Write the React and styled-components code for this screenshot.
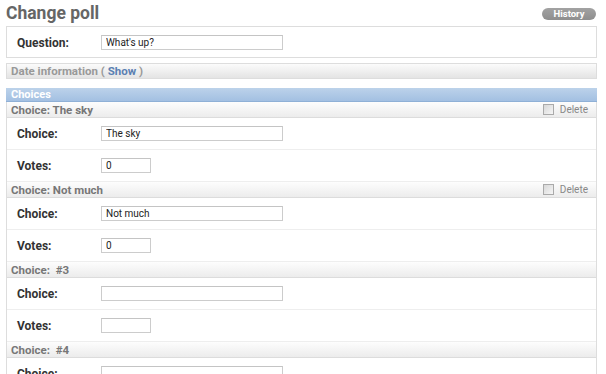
import React from 'react'
import styled, { createGlobalStyle } from 'styled-components'

const GlobalStyle = createGlobalStyle`
  html, body {
    margin: 0;
    padding: 0;
    background: #fff;
    font-family: Roboto, "Liberation Sans", Arial, sans-serif;
    color: #333;
  }
`

const choices = [
  { title: 'The sky', choice: 'The sky', votes: '0', canDelete: true },
  { title: 'Not much', choice: 'Not much', votes: '0', canDelete: true },
  { title: '\u00a0#3', choice: '', votes: '', canDelete: false },
  { title: '\u00a0#4', choice: '', votes: '', canDelete: false },
]

const App = () => {
  return (
    <>
      <GlobalStyle />
      <Page>
        <Header>
          <Title>Change poll</Title>
          <HistoryLink>History</HistoryLink>
        </Header>

        <Module>
          <FormRow $last>
            <Label>Question:</Label>
            <TextInput $width={182} defaultValue="What's up?" />
          </FormRow>
        </Module>

        <CollapseBar>
          Date information ( <ShowLink>Show</ShowLink> )
        </CollapseBar>

        <InlineGroup>
          <GroupHeader>Choices</GroupHeader>
          {choices.map((item, i) => (
            <InlineItem key={i}>
              <InlineTitle>
                <span>Choice: {item.title}</span>
                {item.canDelete && (
                  <DeleteBox>
                    <Check />
                    Delete
                  </DeleteBox>
                )}
              </InlineTitle>
              <FormRow>
                <Label>Choice:</Label>
                <TextInput $width={182} defaultValue={item.choice} />
              </FormRow>
              <FormRow>
                <Label>Votes:</Label>
                <TextInput $width={50} defaultValue={item.votes} />
              </FormRow>
            </InlineItem>
          ))}
        </InlineGroup>
      </Page>
    </>
  )
}

export default App

const Page = styled.div`
  width: 591px;
  padding: 0 9px 0 6px;
  height: 374px;
  overflow: hidden;
`

const Header = styled.div`
  display: flex;
  align-items: center;
  justify-content: space-between;
  height: 26px;
`

const Title = styled.h1`
  margin: 0;
  font-size: 17.5px;
  font-weight: bold;
  color: #666;
  line-height: 26px;
`

const HistoryLink = styled.a`
  display: block;
  height: 12px;
  line-height: 12px;
  padding: 0 9px;
  margin-right: 1px;
  margin-top: 1px;
  width: 36px;
  text-align: center;
  border-radius: 7px;
  background: linear-gradient(#a2a2a2, #8e8e8e);
  color: #fff;
  font-size: 9.5px;
  font-weight: bold;
`

const Module = styled.div`
  border: 1px solid #ddd;
`

const FormRow = styled.div`
  display: flex;
  align-items: center;
  padding: 8px 10px ${p => (p.$last ? '7px' : '8px')};
  border-bottom: ${p => (p.$last ? 'none' : '1px solid #eee')};
  background: #fff;
`

const Label = styled.label`
  width: 84px;
  flex: none;
  font-size: 12px;
  font-weight: bold;
  color: #333;
`

const TextInput = styled.input`
  box-sizing: border-box;
  width: ${p => p.$width}px;
  height: 15px;
  margin: 0;
  padding: 0 4px;
  border: 1px solid #ccc;
  border-top-color: #c4c4c4;
  font-family: Roboto, "Liberation Sans", Arial, sans-serif;
  font-size: 10px;
  color: #222;
  outline: none;
`

const CollapseBar = styled.div`
  margin-top: 5px;
  height: 14px;
  line-height: 14px;
  padding: 0 4px;
  border: 1px solid #ddd;
  background: linear-gradient(#fbfbfb, #e4e4e4);
  font-size: 11.5px;
  font-weight: bold;
  color: #999;
  white-space: pre;
`

const ShowLink = styled.a`
  color: #5b80b2;
`

const InlineGroup = styled.div`
  margin-top: 9px;
  border-left: 1px solid #ddd;
  border-right: 1px solid #ddd;
`

const GroupHeader = styled.div`
  height: 13px;
  line-height: 13px;
  padding: 0 5px;
  margin: 0 -1px;
  background: linear-gradient(#bcd2ea, #a3c0e2);
  border-bottom: 1px solid #8fb0d6;
  color: #fff;
  font-size: 11px;
  font-weight: bold;
`

const InlineItem = styled.div``

const InlineTitle = styled.div`
  display: flex;
  align-items: center;
  justify-content: space-between;
  height: 15px;
  padding: 0 8px 0 4px;
  background: linear-gradient(#fdfdfd, #ececec);
  border-bottom: 1px solid #dcdcdc;
  font-size: 11.5px;
  font-weight: bold;
  color: #777;
  white-space: pre;
`

const DeleteBox = styled.span`
  display: flex;
  align-items: center;
  gap: 6px;
  font-weight: normal;
  font-size: 10px;
  color: #888;
`

const Check = styled.span`
  display: block;
  width: 9px;
  height: 9px;
  border: 1px solid #aaa;
  background: linear-gradient(135deg, #d8d8d8, #f6f6f6);
`
